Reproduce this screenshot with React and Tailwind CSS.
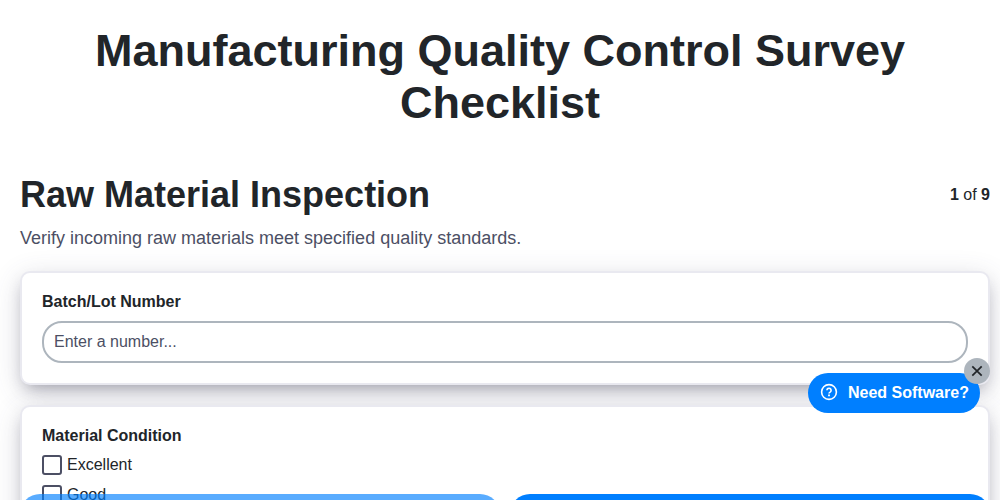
const conditions = ['Excellent', 'Good'];

function Card({ title, children }) {
  return (
    <section className="rounded-[10px] border-2 border-[#e9e9f0] bg-white px-5 pt-[18px] shadow-[0_7px_29px_0_rgba(70,70,100,0.2),0_8px_16px_-6px_rgba(40,40,60,0.38)]">
      <h3 className="text-base leading-[22px] font-bold">{title}</h3>
      {children}
    </section>
  );
}

export default function App() {
  return (
    <div className="relative h-[500px] overflow-hidden bg-white pt-[25px] pr-2.5 pl-5 font-['Liberation_Sans',Arial,sans-serif] text-base text-[#212529]">
      <h1 className="pr-2.5 text-center text-[45px] leading-[52px] font-bold">
        Manufacturing Quality Control Survey Checklist
      </h1>

      {/* Section heading */}
      <div className="mt-[45px] flex items-center justify-between">
        <h2 className="text-[36px] leading-[42px] font-bold">Raw Material Inspection</h2>
        <div className="leading-6"><b>1</b> of <b>9</b></div>
      </div>
      <p className="mt-[11px] text-lg leading-[22px] text-[#4c4f64]">
        Verify incoming raw materials meet specified quality standards.
      </p>

      <div className="mt-[22px] flex flex-col gap-5">
        <Card title="Batch/Lot Number">
          <input
            type="text"
            placeholder="Enter a number..."
            className="mt-2 mb-5 block h-[42px] w-full rounded-[20px] border-2 border-[#adb5bd] bg-white px-2.5 placeholder:text-[#4c4f64] focus:outline-none"
          />
        </Card>

        <Card title="Material Condition">
          <div className="mt-2 h-[200px] space-y-2.5">
            {conditions.map(c => (
              <label key={c} className="flex h-5 items-center gap-[5px]">
                <input type="checkbox" className="size-5 appearance-none rounded-[3px] border-2 border-[#4c4f64]" />
                <span className="leading-5">{c}</span>
              </label>
            ))}
          </div>
        </Card>
      </div>

      {/* Bottom navigation, runs below the fold */}
      <div className="absolute top-[494px] right-2.5 left-5 flex gap-2.5">
        <button aria-label="Previous" className="h-10 flex-1 rounded-[20px] bg-[#007fff] opacity-65" />
        <button aria-label="Next" className="h-10 flex-1 rounded-[20px] bg-[#007fff]" />
      </div>

      {/* Floating help button */}
      <div className="absolute top-[373px] right-5">
        <button className="flex h-10 w-[172px] items-center gap-2.5 rounded-[20px] bg-[#007fff] pl-3 font-bold whitespace-nowrap text-white">
          <svg viewBox="0 0 18 18" className="mb-0.5 size-[18px] shrink-0" fill="none" stroke="currentColor" strokeWidth="1.6">
            <circle cx="9" cy="9" r="7.4" />
            <path d="M6.9 7.3a2.1 2.1 0 1 1 3.2 1.8c-.7.4-1.1.8-1.1 1.5" />
            <path d="M9 11.5v1.8" strokeWidth="1.9" />
          </svg>
          Need Software?
        </button>
        <button aria-label="Close" className="absolute -top-[15px] -right-2.5 flex size-[26px] items-center justify-center rounded-full bg-[#adb5bd]">
          <svg viewBox="0 0 10 10" className="size-2.5 overflow-visible" fill="none" stroke="#212529" strokeWidth="1.7">
            <path d="M.3.3l9.4 9.4M9.7.3L.3 9.7" />
          </svg>
        </button>
      </div>
    </div>
  );
}
